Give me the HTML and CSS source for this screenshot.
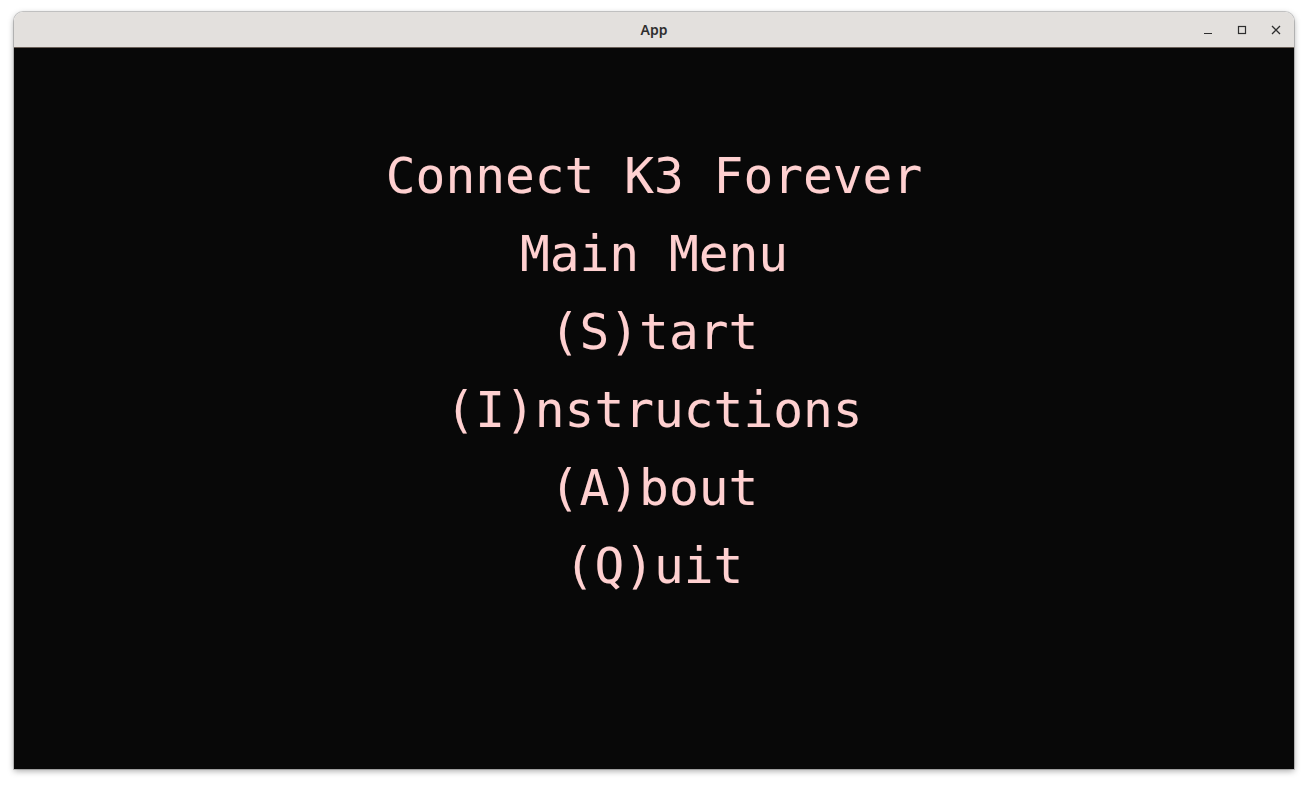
FILE: index.html
```html
<!DOCTYPE html>
<html>
<head>
<meta charset="utf-8">
<title>App</title>
<link rel="stylesheet" href="styles.css">
</head>
<body>
<div class="window">
  <div class="titlebar">
    <div class="title">App</div>
    <div class="controls">
      <span class="ctl">
        <svg width="12" height="12" viewBox="0 0 12 12"><path d="M2 9.5h8" stroke="#2e2e2e" stroke-width="1.2" fill="none"/></svg>
      </span>
      <span class="ctl">
        <svg width="12" height="12" viewBox="0 0 12 12"><rect x="2.5" y="2.5" width="7" height="7" stroke="#2e2e2e" stroke-width="1.2" fill="none"/></svg>
      </span>
      <span class="ctl">
        <svg width="12" height="12" viewBox="0 0 12 12"><path d="M2 2l8 8M10 2l-8 8" stroke="#2e2e2e" stroke-width="1.3" fill="none"/></svg>
      </span>
    </div>
  </div>
  <div class="content">
    <div class="menu">
      <div class="line">Connect K3 Forever</div>
      <div class="line">Main Menu</div>
      <div class="line">(S)tart</div>
      <div class="line">(I)nstructions</div>
      <div class="line">(A)bout</div>
      <div class="line">(Q)uit</div>
    </div>
  </div>
</div>
</body>
</html>
```
FILE: styles.css
```css
html, body {
  margin: 0;
  padding: 0;
  background: #ffffff;
}
body {
  width: 1308px;
  height: 786px;
  padding: 12px 14px 0 14px;
  box-sizing: border-box;
}
.window {
  width: 1280px;
  height: 757px;
  border-radius: 9px 9px 0 0;
  overflow: hidden;
  display: flex;
  flex-direction: column;
  box-shadow: 0 0 0 1px rgba(0,0,0,0.18), 0 2px 6px rgba(0,0,0,0.35);
}
.titlebar {
  height: 36px;
  flex: none;
  background: #e3e0dd;
  border-bottom: 1px solid #6b6058;
  box-sizing: border-box;
  display: flex;
  align-items: center;
  justify-content: center;
  position: relative;
}
.title {
  font-family: "Noto Sans", "Open Sans", sans-serif;
  font-size: 14px;
  font-weight: 600;
  color: #2e2e2e;
}
.controls {
  position: absolute;
  right: 6px;
  top: 0;
  height: 36px;
  display: flex;
  align-items: center;
  gap: 10px;
}
.ctl {
  width: 24px;
  height: 24px;
  display: flex;
  align-items: center;
  justify-content: center;
}
.content {
  flex: 1;
  background: #080808;
  padding-top: 89px;
  box-sizing: border-box;
}
.menu {
  display: flex;
  flex-direction: column;
  align-items: center;
}
.line {
  font-family: "DejaVu Sans Mono", "Liberation Mono", monospace;
  font-size: 49.5px;
  line-height: 78px;
  color: #ffd0d0;
  white-space: pre;
  text-shadow: 0 0 1px #3a3434;
}
```
